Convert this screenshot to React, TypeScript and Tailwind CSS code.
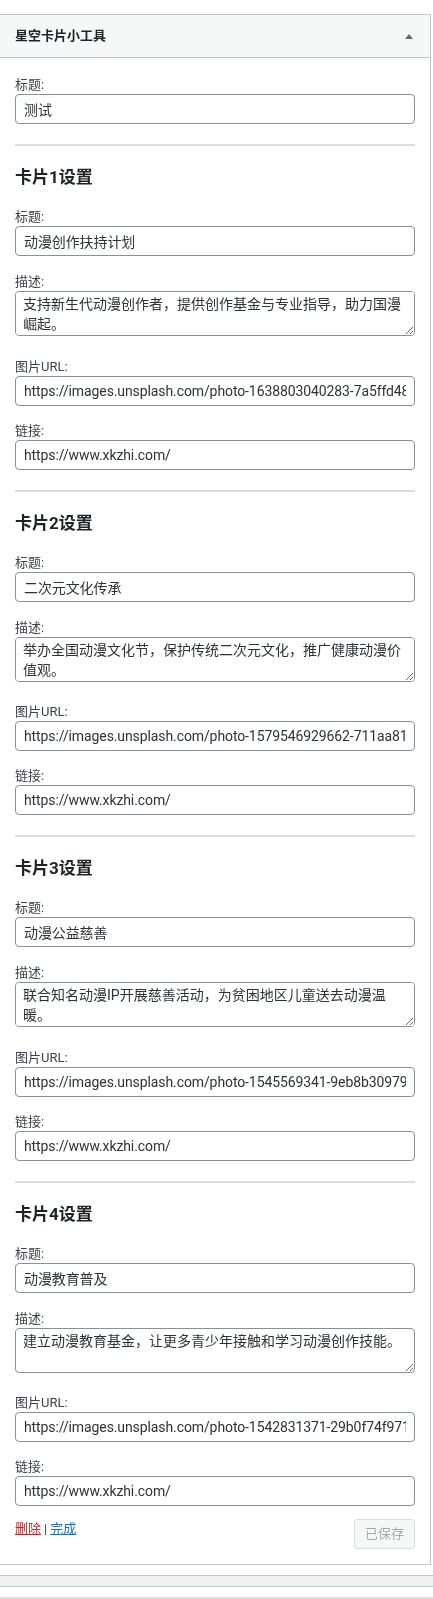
import React from 'react'

type Card = {
  title: string
  desc: string
  image: string
  link: string
}

const cards: Card[] = [
  {
    title: '动漫创作扶持计划',
    desc: '支持新生代动漫创作者，提供创作基金与专业指导，助力国漫崛起。',
    image: 'https://images.unsplash.com/photo-1638803040283-7a5ffd48dad5?w=800',
    link: 'https://www.xkzhi.com/',
  },
  {
    title: '二次元文化传承',
    desc: '举办全国动漫文化节，保护传统二次元文化，推广健康动漫价值观。',
    image: 'https://images.unsplash.com/photo-1579546929662-711aa81148cf?w=800',
    link: 'https://www.xkzhi.com/',
  },
  {
    title: '动漫公益慈善',
    desc: '联合知名动漫IP开展慈善活动，为贫困地区儿童送去动漫温暖。',
    image: 'https://images.unsplash.com/photo-1545569341-9eb8b30979d9?w=800',
    link: 'https://www.xkzhi.com/',
  },
  {
    title: '动漫教育普及',
    desc: '建立动漫教育基金，让更多青少年接触和学习动漫创作技能。',
    image: 'https://images.unsplash.com/photo-1542831371-29b0f74f9713?w=800',
    link: 'https://www.xkzhi.com/',
  },
]

const inputCls =
  'block h-[30px] w-full rounded-[4px] border border-[#8c8f94] bg-white px-[8px] text-[14px] leading-[28px] tracking-[-0.1px] text-[#2c3338] outline-none'

function Label({ children }: { children: React.ReactNode }) {
  return <label className="block h-[18px] text-[13px] leading-[18px] text-[#3c434a]">{children}</label>
}

function Field({ label, value, className = '' }: { label: string; value: string; className?: string }) {
  return (
    <div className={className}>
      <Label>{label}</Label>
      <input type="text" defaultValue={value} className={inputCls} />
    </div>
  )
}

function CardSettings({ index, card }: { index: number; card: Card }) {
  return (
    <div>
      <div className="h-[2px] bg-[#dcdcde]" />
      <h3 className="mt-[19px] h-[24px] text-[17px] font-bold leading-[24px] text-[#1d2327]">
        卡片{index}设置
      </h3>
      <Field className="mt-[19px]" label="标题:" value={card.title} />
      <div className="mt-[17px]">
        <Label>描述:</Label>
        <textarea
          defaultValue={card.desc}
          className="block h-[45px] w-full rounded-[4px] border border-[#8c8f94] bg-white px-[7px] py-[2px] text-[14px] leading-[20px] text-[#2c3338] outline-none"
        />
      </div>
      <Field className="mt-[21.5px]" label="图片URL:" value={card.image} />
      <Field className="mt-[16px]" label="链接:" value={card.link} />
      <div className="h-[20px]" />
    </div>
  )
}

export default function App() {
  return (
    <div className="min-h-[1599px] bg-white pt-[14px] font-[Roboto,'Noto_Sans_CJK_SC',sans-serif]">
      <div className="w-[431px] border-y border-r border-[#c3c4c7] bg-white">
        {/* widget header */}
        <div className="flex h-[43px] items-center justify-between border-b border-[#c3c4c7] bg-[#f6f7f7] px-[15px]">
          <h3 className="text-[13px] font-bold text-[#1d2327]">星空卡片小工具</h3>
          <svg width="8" height="5" viewBox="0 0 8 5" className="mr-[2px]">
            <polygon points="4,0 8,5 0,5" fill="#646970" />
          </svg>
        </div>

        <div className="px-[15px] pb-[15px] pt-[18px]">
          <Field label="标题:" value="测试" />
          <div className="h-[20px]" />

          {cards.map((card, i) => (
            <CardSettings key={i} index={i + 1} card={card} />
          ))}

          <div className="mt-[-7px] flex items-start justify-between">
            <div className="mt-[1px] text-[13px] leading-[18px] text-[#3c434a]">
              <a href="#" className="text-[#b32d2e] underline">删除</a>
              <span className="mx-[3px]">|</span>
              <a href="#" className="text-[#2271b1] underline">完成</a>
            </div>
            <button
              disabled
              className="h-[30px] rounded-[3px] border border-[#dcdcde] bg-[#f6f7f7] px-[10px] text-[13px] leading-[28px] text-[#a7aaad]"
            >
              已保存
            </button>
          </div>
        </div>
      </div>

      <div className="mt-[10px] h-[12px] border-y border-[#c3c4c7] bg-[#f0f0f1]" />
      <div className="mt-[10px] h-[2px] bg-[#e8d9dd]" />
    </div>
  )
}
